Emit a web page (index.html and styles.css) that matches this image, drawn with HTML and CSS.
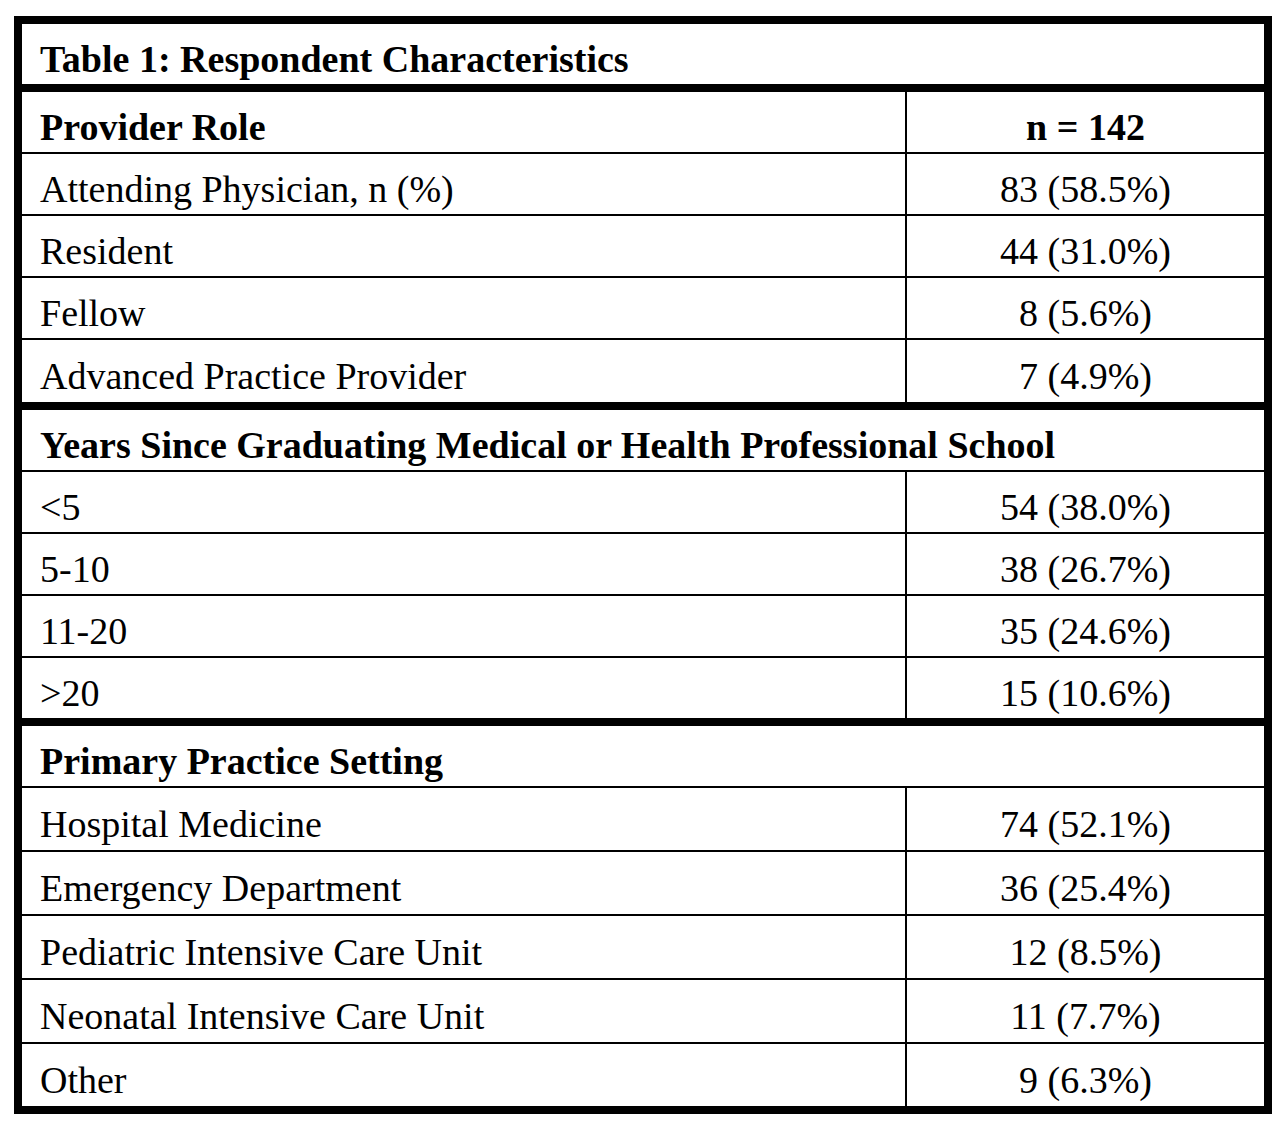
FILE: index.html
```html
<!DOCTYPE html>
<html>
<head>
<meta charset="utf-8">
<link rel="stylesheet" href="styles.css">
</head>
<body>
<table class="tbl">
  <colgroup><col class="c1"><col class="c2"></colgroup>
  <tr class="title sec-end"><td colspan="2">Table 1: Respondent Characteristics</td></tr>
  <tr class="head"><td>Provider Role</td><td class="num">n = 142</td></tr>
  <tr><td>Attending Physician, n (%)</td><td class="num">83 (58.5%)</td></tr>
  <tr><td>Resident</td><td class="num">44 (31.0%)</td></tr>
  <tr><td>Fellow</td><td class="num">8 (5.6%)</td></tr>
  <tr class="sec-end tall"><td>Advanced Practice Provider</td><td class="num">7 (4.9%)</td></tr>
  <tr class="head"><td colspan="2">Years Since Graduating Medical or Health Professional School</td></tr>
  <tr><td>&lt;5</td><td class="num">54 (38.0%)</td></tr>
  <tr><td>5-10</td><td class="num">38 (26.7%)</td></tr>
  <tr><td>11-20</td><td class="num">35 (24.6%)</td></tr>
  <tr class="sec-end"><td>&gt;20</td><td class="num">15 (10.6%)</td></tr>
  <tr class="head"><td colspan="2">Primary Practice Setting</td></tr>
  <tr class="tall"><td>Hospital Medicine</td><td class="num">74 (52.1%)</td></tr>
  <tr class="tall"><td>Emergency Department</td><td class="num">36 (25.4%)</td></tr>
  <tr class="tall"><td>Pediatric Intensive Care Unit</td><td class="num">12 (8.5%)</td></tr>
  <tr class="tall"><td>Neonatal Intensive Care Unit</td><td class="num">11 (7.7%)</td></tr>
  <tr class="tall"><td>Other</td><td class="num">9 (6.3%)</td></tr>
</table>
</body>
</html>
```
FILE: styles.css
```css
html, body {
  margin: 0;
  padding: 0;
  background: #fff;
}
body {
  padding: 16px 0 0 14px;
  font-family: "Liberation Serif", "Times New Roman", serif;
  color: #000;
}
.tbl {
  border-collapse: collapse;
  width: 1258px;
  border: 8px solid #000;
  font-size: 38px;
}
.c1 { width: 888px; }
.tbl td {
  border: 2px solid #000;
  padding: 10px 0 0 18px;
  height: 50px;
  line-height: 1;
  vertical-align: middle;
}
.tbl td.num {
  text-align: center;
  padding: 10px 0 0 0;
}
.title td, .head td {
  font-weight: bold;
}
.sec-end td {
  border-bottom: 8px solid #000;
}
.tall td {
  height: 52px;
}
```
